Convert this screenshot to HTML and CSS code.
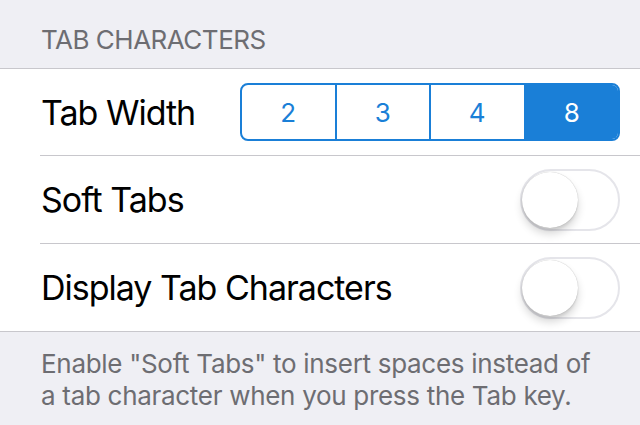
FILE: index.html
```html
<!DOCTYPE html>
<html lang="en">
<head>
    <meta charset="UTF-8">
    <meta name="viewport" content="width=device-width, initial-scale=1.0">
    <title>Tab Characters</title>
    <link rel="stylesheet" href="styles.css">
</head>
<body>
    <div class="section-header">TAB CHARACTERS</div>
    <div class="group">
        <div class="row first">
            <span class="label">Tab Width</span>
            <div class="segmented">
                <div class="segment">2</div>
                <div class="segment">3</div>
                <div class="segment">4</div>
                <div class="segment active">8</div>
            </div>
        </div>
        <div class="row">
            <span class="label">Soft Tabs</span>
            <div class="toggle"><div class="knob"></div></div>
        </div>
        <div class="row last">
            <span class="label">Display Tab Characters</span>
            <div class="toggle"><div class="knob"></div></div>
        </div>
    </div>
    <div class="section-footer">
        Enable "Soft Tabs" to insert spaces instead of a tab character when you press the Tab key.
    </div>
</body>
</html>
```
FILE: styles.css
```css
body {
    font-family: Inter, "Liberation Sans", sans-serif;
    margin: 0;
    background-color: #efeff4;
    width: 640px;
}

.section-header {
    height: 68px;
    box-sizing: border-box;
    padding: 27px 0 0 41px;
    font-size: 26px;
    line-height: 26px;
    letter-spacing: -0.5px;
    color: #6d6d72;
}

.group {
    background-color: #ffffff;
    border-top: 1px solid #c8c7cc;
    border-bottom: 1px solid #c8c7cc;
    padding-left: 40px;
}

.row {
    height: 87px;
    display: flex;
    align-items: center;
    justify-content: space-between;
    padding-right: 20px;
    border-bottom: 1px solid #c8c7cc;
}

.row.first {
    height: 86px;
}

.row.last {
    border-bottom: none;
}

.label {
    font-size: 34px;
    letter-spacing: -1px;
    color: #000000;
    padding-left: 1px;
}

.segmented {
    display: flex;
    width: 380px;
    height: 58px;
    box-sizing: border-box;
    border: 2px solid #1a7fd7;
    border-radius: 8px;
    overflow: hidden;
}

.segment {
    flex: 1;
    display: flex;
    align-items: center;
    justify-content: center;
    font-size: 26px;
    color: #1a7fd7;
    border-left: 2px solid #1a7fd7;
}

.segment:first-child {
    border-left: none;
}

.segment.active {
    background-color: #1a7fd7;
    color: #ffffff;
}

.toggle {
    position: relative;
    width: 100px;
    height: 62px;
    box-sizing: border-box;
    border: 2px solid #e5e5ea;
    border-radius: 31px;
}

.knob {
    position: absolute;
    left: 0;
    top: 1px;
    width: 56px;
    height: 56px;
    border-radius: 50%;
    background-color: #ffffff;
    box-shadow: 0 6px 8px rgba(0, 0, 0, 0.16), 0 0 1px rgba(0, 0, 0, 0.3), 0 3px 2px rgba(0, 0, 0, 0.06);
}

.section-footer {
    padding: 16px 40px 0 41px;
    font-size: 26px;
    line-height: 32px;
    letter-spacing: -0.3px;
    color: #6d6d72;
}
```
